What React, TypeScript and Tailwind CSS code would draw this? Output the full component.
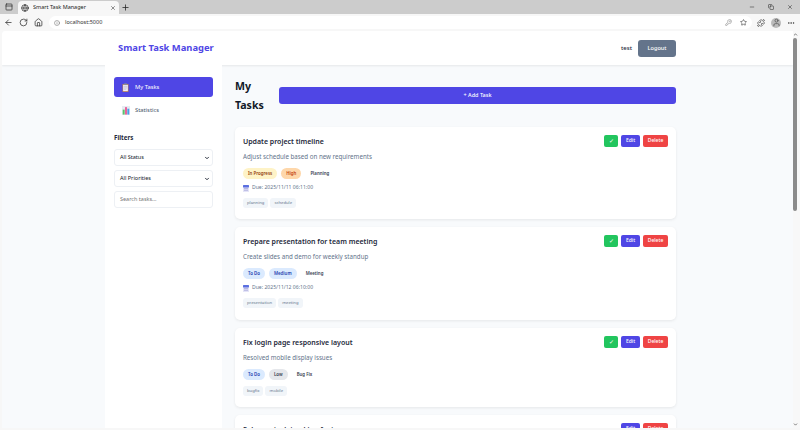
import React from 'react'
import { ArrowLeft, RotateCw, Home, Info, KeyRound, Star, Puzzle, MoreHorizontal, X, Plus, Minus, Globe, PanelTop, Copy, ChevronDown, User, ChevronUp } from 'lucide-react'

type Task = {
    title: string
    desc: string
    status: string
    statusCls: string
    priority: string
    priorityCls: string
    category: string
    due?: string
    tags: string[]
    height: string
    done?: boolean
}

const tasks: Task[] = [
    {
        title: 'Update project timeline',
        desc: 'Adjust schedule based on new requirements',
        status: 'In Progress',
        statusCls: 'bg-[#fef3c7] text-[#92400e]',
        priority: 'High',
        priorityCls: 'bg-[#fed7aa] text-[#c2410c]',
        category: 'Planning',
        due: 'Due: 2025/11/11 06:11:00',
        tags: ['planning', 'schedule'],
        height: 'h-[92px]',
    },
    {
        title: 'Prepare presentation for team meeting',
        desc: 'Create slides and demo for weekly standup',
        status: 'To Do',
        statusCls: 'bg-[#dbeafe] text-[#1e40af]',
        priority: 'Medium',
        priorityCls: 'bg-[#dbeafe] text-[#1e40af]',
        category: 'Meeting',
        due: 'Due: 2025/11/12 06:10:00',
        tags: ['presentation', 'meeting'],
        height: 'h-[93px]',
    },
    {
        title: 'Fix login page responsive layout',
        desc: 'Resolved mobile display issues',
        status: 'To Do',
        statusCls: 'bg-[#dbeafe] text-[#1e40af]',
        priority: 'Low',
        priorityCls: 'bg-[#e5e7eb] text-[#374151]',
        category: 'Bug Fix',
        tags: ['bugfix', 'mobile'],
        height: 'h-[79px]',
    },
]

const BrowserBar = () => (
    <div className="shrink-0">
        <div className="flex h-[14px] items-end bg-[#cccccc] text-[#222]">
            <PanelTop size={8} className="ml-[5px] mb-[3px]" />
            <div className="ml-[5px] flex h-[13px] w-[101px] items-center gap-[4px] rounded-t-[4px] bg-[#f7f7f7] px-[3px]">
                <Globe size={8} />
                <span className="flex-1 truncate text-[5.5px]">Smart Task Manager</span>
                <X size={6} />
            </div>
            <Plus size={9} className="ml-[2px] mb-[2px]" />
            <div className="ml-auto mb-[4px] flex items-center gap-[13px] pr-[7px]">
                <Minus size={6} />
                <Copy size={6} />
                <X size={6} />
            </div>
        </div>
        <div className="flex h-[17px] items-center bg-[#f7f7f7] pl-[4px] pr-[5px] text-[#333]">
            <ArrowLeft size={9} />
            <RotateCw size={9} className="ml-[6px]" />
            <Home size={9} className="ml-[6px]" />
            <div className="ml-[6px] flex h-[13px] flex-1 items-center gap-[5px] rounded-full bg-white pl-[5px] pr-[5px]">
                <Info size={6} className="text-[#666]" />
                <span className="flex-1 text-[5.5px] text-[#333]">localhost:5000</span>
                <KeyRound size={7} className="mr-[3px] text-[#888]" />
                <Star size={7} />
            </div>
            <Puzzle size={8} className="ml-[5px]" />
            <div className="ml-[6px] flex h-[10px] w-[10px] items-center justify-center overflow-hidden rounded-full bg-[#bbb]">
                <User size={9} className="text-[#555]" />
            </div>
            <MoreHorizontal size={8} className="ml-[6px]" />
        </div>
    </div>
)

const Clipboard = () => (
    <svg width="7" height="9" viewBox="0 0 8 10">
        <rect x="0.5" y="1" width="7" height="9" rx="0.6" fill="#b07a5a" />
        <rect x="1.3" y="2" width="5.4" height="7.2" fill="#f3eef8" />
        <rect x="2.4" y="0.3" width="3.2" height="2" fill="#8a8a96" />
        <path d="M2 4h4M2 5.5h4M2 7h3" stroke="#a9a3c8" strokeWidth="0.6" />
    </svg>
)

const BarChart = () => (
    <svg width="8" height="9" viewBox="0 0 9 10">
        <rect x="0" y="0" width="9" height="10" fill="#e6ebf2" />
        <rect x="0.8" y="4" width="2.2" height="5.6" fill="#5cc46a" />
        <rect x="3.4" y="1.2" width="2.2" height="8.4" fill="#e8609a" />
        <rect x="6" y="3" width="2.2" height="6.6" fill="#4a9fe8" />
    </svg>
)

const Calendar = () => (
    <svg width="6" height="7" viewBox="0 0 6 7">
        <rect width="6" height="7" rx="0.6" fill="#e4e4f7" />
        <rect width="6" height="2.4" rx="0.6" fill="#5b6fe0" />
        <path d="M1 3.6h4M1 5.2h4" stroke="#8f8fd0" strokeWidth="0.6" />
    </svg>
)

const FilterSelect = ({ label }: { label: string }) => (
    <div className="flex h-[17px] items-center justify-between rounded-[3px] border border-[#edf0f4] bg-white pl-[5px] pr-[2px] text-[5.5px] text-[#111827]">
        <span>{label}</span>
        <ChevronDown size={6} strokeWidth={3.5} />
    </div>
)

const Sidebar = () => (
    <aside className="flex w-[117px] shrink-0 flex-col bg-white px-[9px] pt-[12px]">
        <div className="flex h-[20px] items-center gap-[6px] rounded-[3px] bg-[#4f46e5] pl-[8px] text-[5.8px] text-white">
            <Clipboard />
            <span>My Tasks</span>
        </div>
        <div className="mt-[3px] flex h-[20px] items-center gap-[5px] pl-[8px] text-[5.8px] text-[#475569]">
            <BarChart />
            <span>Statistics</span>
        </div>
        <h3 className="mt-[12px] text-[6.2px] leading-[11px] font-bold text-[#1e293b]">Filters</h3>
        <div className="mt-[6px] flex flex-col gap-[4px]">
            <FilterSelect label="All Status" />
            <FilterSelect label="All Priorities" />
            <div className="flex h-[17px] items-center rounded-[3px] border border-[#edf0f4] bg-white pl-[5px] text-[5.5px] text-[#757575]">
                Search tasks...
            </div>
        </div>
    </aside>
)

const ActionButtons = ({ done }: { done?: boolean }) => (
    <div className="flex items-start gap-[3px] text-[5px] font-medium text-white">
        {!done && <span className="flex h-[12px] w-[14px] items-center justify-center rounded-[2px] bg-[#22c55e] text-[6px]">✓</span>}
        <span className="flex h-[12px] w-[19px] items-center justify-center rounded-[2px] bg-[#4f46e5]">Edit</span>
        <span className="flex h-[12px] w-[25px] items-center justify-center rounded-[2px] bg-[#ef4444]">Delete</span>
    </div>
)

const TaskCard = ({ task }: { task: Task }) => (
    <div className={`${task.height} flex shrink-0 justify-between rounded-[5px] bg-white p-[8px] shadow-[0_1px_3px_rgba(0,0,0,0.08)]`}>
        <div className="min-w-0 pt-[1px]">
            <h3 className="text-[7px] leading-[12px] font-semibold text-[#1e293b]">{task.title}</h3>
            <p className="mt-[4px] text-[6.2px] leading-[10px] text-[#64748b]">{task.desc}</p>
            <div className="mt-[6px] flex items-center gap-[4px] text-[4.4px] font-semibold">
                <span className={`flex h-[11px] items-center rounded-full px-[5px] ${task.statusCls}`}>{task.status}</span>
                <span className={`flex h-[11px] items-center rounded-full px-[5px] ${task.priorityCls}`}>{task.priority}</span>
                <span className="flex h-[11px] items-center px-[5px] text-[#374151]">{task.category}</span>
            </div>
            {task.due && (
                <div className="mt-[4px] flex h-[10px] items-center gap-[3px] text-[5.1px] text-[#64748b]">
                    <Calendar />
                    <span>{task.due}</span>
                </div>
            )}
            <div className={`${task.due ? 'mt-[5px]' : 'mt-[6px]'} flex gap-[2px] text-[4.2px] text-[#64748b]`}>
                {task.tags.map((tag) => (
                    <span key={tag} className="flex h-[10px] items-center rounded-[3px] bg-[#f1f5f9] px-[4px]">{tag}</span>
                ))}
            </div>
        </div>
        <ActionButtons done={task.done} />
    </div>
)

const App = () => (
    <div className="flex h-[430px] w-[800px] flex-col overflow-hidden bg-[#f7f7f7] font-['Noto_Sans','Open_Sans',sans-serif]">
        <BrowserBar />
        <div className="flex min-h-0 flex-1 pb-[2px] pl-[2px]">
            <div className="flex min-w-0 flex-1 flex-col overflow-hidden rounded-tl-[3px] bg-[#f8fafc]">
                <header className="flex h-[34px] shrink-0 items-center justify-between bg-white pr-[117px] pl-[116px] shadow-[0_1px_2px_rgba(0,0,0,0.08)]">
                    <h1 className="text-[9.4px] font-bold text-[#4f46e5]">Smart Task Manager</h1>
                    <div className="flex items-center gap-[6px]">
                        <span className="text-[6px] font-medium text-[#1e293b]">test</span>
                        <button className="h-[17px] w-[38px] rounded-[3px] bg-[#64748b] text-[5.6px] font-medium text-white">Logout</button>
                    </div>
                </header>
                <div className="flex min-h-0 flex-1 pl-[103px]">
                    <Sidebar />
                    <main className="min-w-0 flex-1 overflow-hidden pt-[12px] pl-[13px] pr-[117px]">
                        <div className="flex items-start justify-between">
                            <h2 className="w-[44px] text-[10.6px] leading-[19px] font-bold text-[#111827]">My<br />Tasks</h2>
                            <button className="mt-[10px] h-[17px] w-[397px] rounded-[3px] bg-[#4f46e5] text-[5.5px] font-medium text-white">+ Add Task</button>
                        </div>
                        <div className="mt-[12px] flex flex-col gap-[8px]">
                            {tasks.map((task) => (
                                <TaskCard key={task.title} task={task} />
                            ))}
                            <div className="flex h-[80px] shrink-0 justify-between rounded-[5px] bg-white p-[8px] shadow-[0_1px_3px_rgba(0,0,0,0.08)]">
                                <h3 className="pt-[1px] text-[7px] leading-[12px] font-semibold text-[#1e293b]">Enhance task tracking features</h3>
                                <ActionButtons done />
                            </div>
                        </div>
                    </main>
                </div>
            </div>
            <div className="relative w-[7px] shrink-0 bg-[#f8f8f8] text-[#666]">
                <ChevronUp size={5} strokeWidth={4} className="absolute top-[1px] left-0" />
                <div className="absolute top-[7px] left-0 h-[173px] w-[4px] rounded-full bg-[#8b8b8b]" />
                <ChevronDown size={5} strokeWidth={4} className="absolute bottom-[1px] left-0" />
            </div>
        </div>
    </div>
)

export default App
